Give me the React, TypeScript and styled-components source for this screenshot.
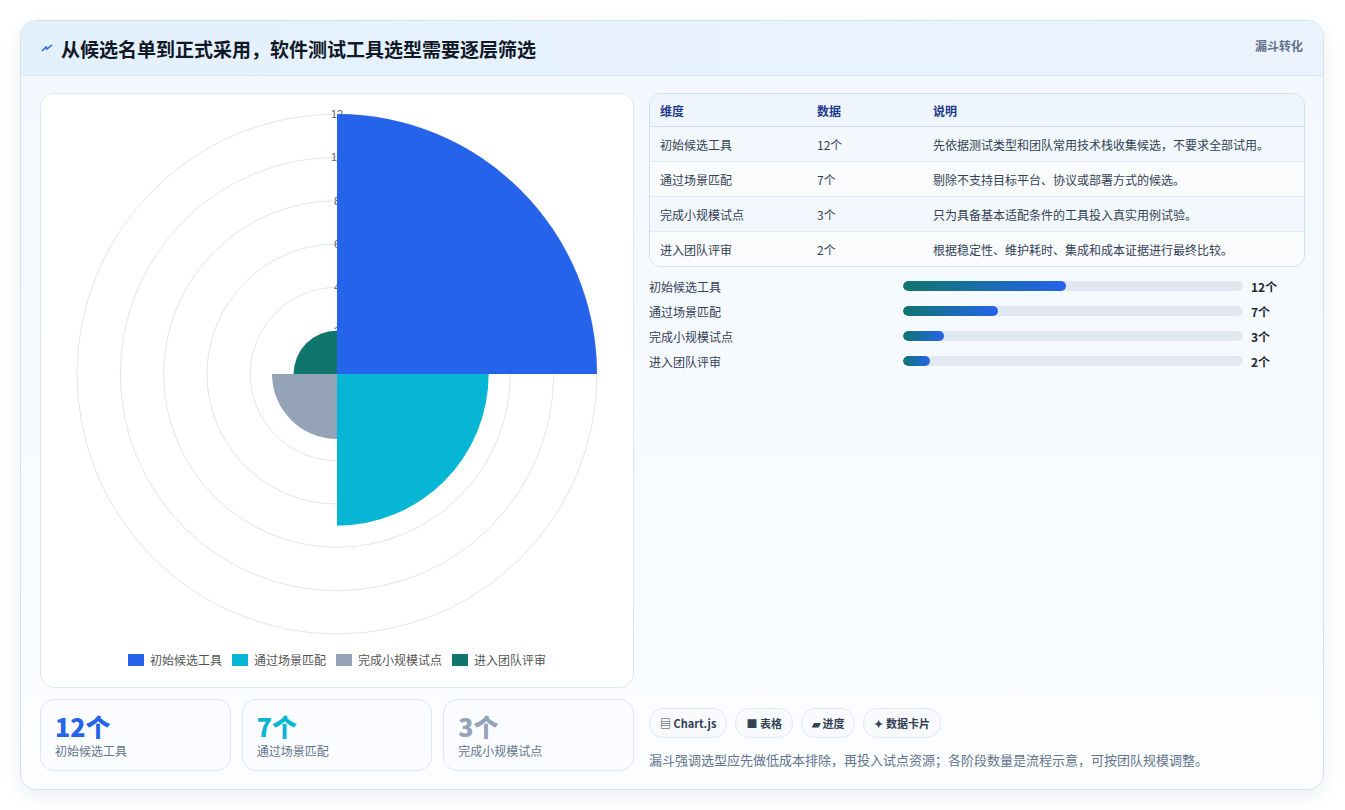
import styled, { createGlobalStyle } from 'styled-components';

const GlobalStyle = createGlobalStyle`
  html, body { margin: 0; padding: 0; background: #ffffff; }
  body { font-family: "Noto Sans CJK SC", "Noto Sans", sans-serif; }
`;

const stages = [
  { name: '初始候选工具', value: 12, color: '#2563eb', note: '先依据测试类型和团队常用技术栈收集候选，不要求全部试用。' },
  { name: '通过场景匹配', value: 7, color: '#06b6d4', note: '剔除不支持目标平台、协议或部署方式的候选。' },
  { name: '完成小规模试点', value: 3, color: '#94a3b8', note: '只为具备基本适配条件的工具投入真实用例试验。' },
  { name: '进入团队评审', value: 2, color: '#0f766e', note: '根据稳定性、维护耗时、集成和成本证据进行最终比较。' },
];

const Page = styled.div`
  padding: 20px 21px 20px 20px;
`;

const Card = styled.div`
  border: 1px solid #cfe3f1;
  border-radius: 16px;
  background: linear-gradient(180deg, #f1f8fe 0%, #f8fbff 60%, #fbfdff 100%);
  box-shadow: 0 6px 18px rgba(15, 40, 80, 0.08);
  overflow: hidden;
  height: 768px;
  display: flex;
  flex-direction: column;
`;

const Header = styled.div`
  height: 55px;
  display: flex;
  align-items: center;
  justify-content: space-between;
  padding: 0 20px 0 20px;
  background: linear-gradient(90deg, #e3f1fc, #ebf3fe);
  border-bottom: 1px solid #d6e8f5;
`;

const Title = styled.h1`
  margin: 0;
  font-size: 19px;
  font-weight: 700;
  color: #111827;
  display: flex;
  align-items: center;
  gap: 8px;
`;

const Tag = styled.span`
  align-self: flex-start;
  margin-top: 16px;
  font-size: 12px;
  font-weight: 700;
  color: #64748b;
`;

const Body = styled.div`
  flex: 1;
  display: grid;
  grid-template-columns: 594px 1fr;
  gap: 15px;
  padding: 17px 18px 18px 19px;
`;

const Left = styled.div`
  display: flex;
  flex-direction: column;
  gap: 11px;
`;

const ChartCard = styled.div`
  height: 593px;
  border: 1px solid #dfe8f1;
  border-radius: 14px;
  background: #ffffff;
  display: flex;
  flex-direction: column;
  align-items: center;
`;

const Legend = styled.div`
  display: flex;
  gap: 10px;
  margin-top: 2px;
  font-size: 12px;
  color: #555;
`;

const LegendItem = styled.span`
  display: flex;
  align-items: center;
  gap: 6px;
`;

const Swatch = styled.i<{ $c: string }>`
  width: 16px;
  height: 12px;
  background: ${({ $c }) => $c};
`;

const Stats = styled.div`
  display: grid;
  grid-template-columns: repeat(3, 1fr);
  gap: 11px;
`;

const Stat = styled.div`
  height: 72px;
  box-sizing: border-box;
  border: 1px solid #dce8f4;
  border-radius: 14px;
  background: #fafcff;
  padding: 10px 14px;
`;

const StatNum = styled.div<{ $c: string }>`
  font-size: 25px;
  font-weight: 800;
  line-height: 32px;
  color: ${({ $c }) => $c};
`;

const StatLabel = styled.div`
  font-size: 12px;
  color: #64748b;
`;

const Right = styled.div`
  display: flex;
  flex-direction: column;
`;

const Table = styled.table`
  width: 100%;
  border-collapse: separate;
  border-spacing: 0;
  border: 1px solid #d3deea;
  border-radius: 12px;
  overflow: hidden;
  font-size: 12px;
  background: #fafcfe;
`;

const Th = styled.th`
  text-align: left;
  font-weight: 700;
  color: #1e3a8a;
  background: #eef5fd;
  height: 32px;
  padding: 0 10px;
  border-bottom: 1px solid #d3deea;
`;

const Td = styled.td<{ $alt: boolean }>`
  height: 34px;
  padding: 0 10px;
  color: #334155;
  background: ${({ $alt }) => ($alt ? '#f2f8fd' : '#f9fbfd')};
  border-bottom: 1px solid #e2eaf2;
  tr:last-child & { border-bottom: none; }
`;

const Bars = styled.div`
  margin-top: 10px;
  display: flex;
  flex-direction: column;
  gap: 7px;
`;

const BarRow = styled.div`
  display: grid;
  grid-template-columns: 246px 340px 1fr;
  align-items: center;
  gap: 8px;
  font-size: 12px;
  height: 18px;
  color: #334155;
`;

const Track = styled.div`
  height: 10px;
  border-radius: 5px;
  background: #e2e8f0;
  overflow: hidden;
`;

const Fill = styled.div`
  height: 100%;
  border-radius: 5px;
  background: linear-gradient(90deg, #0f766e, #2563eb);
`;

const BarVal = styled.b`
  color: #1f2937;
`;

const Footer = styled.div`
  margin-top: auto;
  display: flex;
  flex-direction: column;
  gap: 12px;
`;

const Chips = styled.div`
  display: flex;
  gap: 8px;
`;

const Chip = styled.span`
  height: 28px;
  padding: 0 10px;
  display: flex;
  align-items: center;
  gap: 4px;
  border: 1px solid #e2e8f0;
  border-radius: 14px;
  background: #f8fafc;
  font-size: 11px;
  font-weight: 700;
  color: #334155;
`;

const Note = styled.p`
  margin: 0 0 2px;
  font-size: 13px;
  color: #64748b;
`;

const cx = 296;
const cy = 280;
const unit = 260 / 12;

function wedge(r: number, a0: number, a1: number) {
  const p = (a: number) => [cx + r * Math.cos(a), cy + r * Math.sin(a)];
  const [x0, y0] = p(a0);
  const [x1, y1] = p(a1);
  return `M${cx},${cy} L${x0},${y0} A${r},${r} 0 0 1 ${x1},${y1} Z`;
}

function PolarChart() {
  return (
    <svg width="592" height="555" viewBox="0 0 592 555">
      {[2, 4, 6, 8, 10, 12].map((v) => (
        <circle key={v} cx={cx} cy={cy} r={v * unit} fill="none" stroke="#e5e5e5" />
      ))}
      {[2, 4, 6, 8, 10, 12].map((v) => (
        <text key={v} x={cx} y={cy - v * unit + 4} fontSize="11" fill="#666" textAnchor="middle" fontFamily="Liberation Sans, sans-serif">
          {v}
        </text>
      ))}
      {stages.map((s, i) => {
        const a0 = -Math.PI / 2 + (i * Math.PI) / 2;
        return <path key={s.name} d={wedge(s.value * unit, a0, a0 + Math.PI / 2)} fill={s.color} />;
      })}
    </svg>
  );
}

export default function App() {
  return (
    <Page>
      <GlobalStyle />
      <Card>
        <Header>
          <Title>
            <svg width="12" height="12" viewBox="0 0 12 12">
              <path d="M1 9 L5 5 L6 7 L11 3" stroke="#2563eb" strokeWidth="1.6" fill="none" />
            </svg>
            从候选名单到正式采用，软件测试工具选型需要逐层筛选
          </Title>
          <Tag>漏斗转化</Tag>
        </Header>
        <Body>
          <Left>
            <ChartCard>
              <PolarChart />
              <Legend>
                {stages.map((s) => (
                  <LegendItem key={s.name}>
                    <Swatch $c={s.color} />
                    {s.name}
                  </LegendItem>
                ))}
              </Legend>
            </ChartCard>
            <Stats>
              {stages.slice(0, 3).map((s) => (
                <Stat key={s.name}>
                  <StatNum $c={s.color}>{s.value}个</StatNum>
                  <StatLabel>{s.name}</StatLabel>
                </Stat>
              ))}
            </Stats>
          </Left>
          <Right>
            <Table>
              <thead>
                <tr>
                  <Th style={{ width: 137 }}>维度</Th>
                  <Th style={{ width: 96 }}>数据</Th>
                  <Th>说明</Th>
                </tr>
              </thead>
              <tbody>
                {stages.map((s, i) => (
                  <tr key={s.name}>
                    <Td $alt={i % 2 === 0}>{s.name}</Td>
                    <Td $alt={i % 2 === 0}>{s.value}个</Td>
                    <Td $alt={i % 2 === 0}>{s.note}</Td>
                  </tr>
                ))}
              </tbody>
            </Table>
            <Bars>
              {stages.map((s) => (
                <BarRow key={s.name}>
                  <span>{s.name}</span>
                  <Track>
                    <Fill style={{ width: `${(s.value / 25) * 100}%` }} />
                  </Track>
                  <BarVal>{s.value}个</BarVal>
                </BarRow>
              ))}
            </Bars>
            <Footer>
              <Chips>
                <Chip>▤ Chart.js</Chip>
                <Chip>■ 表格</Chip>
                <Chip>▰ 进度</Chip>
                <Chip>✦ 数据卡片</Chip>
              </Chips>
              <Note>漏斗强调选型应先做低成本排除，再投入试点资源；各阶段数量是流程示意，可按团队规模调整。</Note>
            </Footer>
          </Right>
        </Body>
      </Card>
    </Page>
  );
}
